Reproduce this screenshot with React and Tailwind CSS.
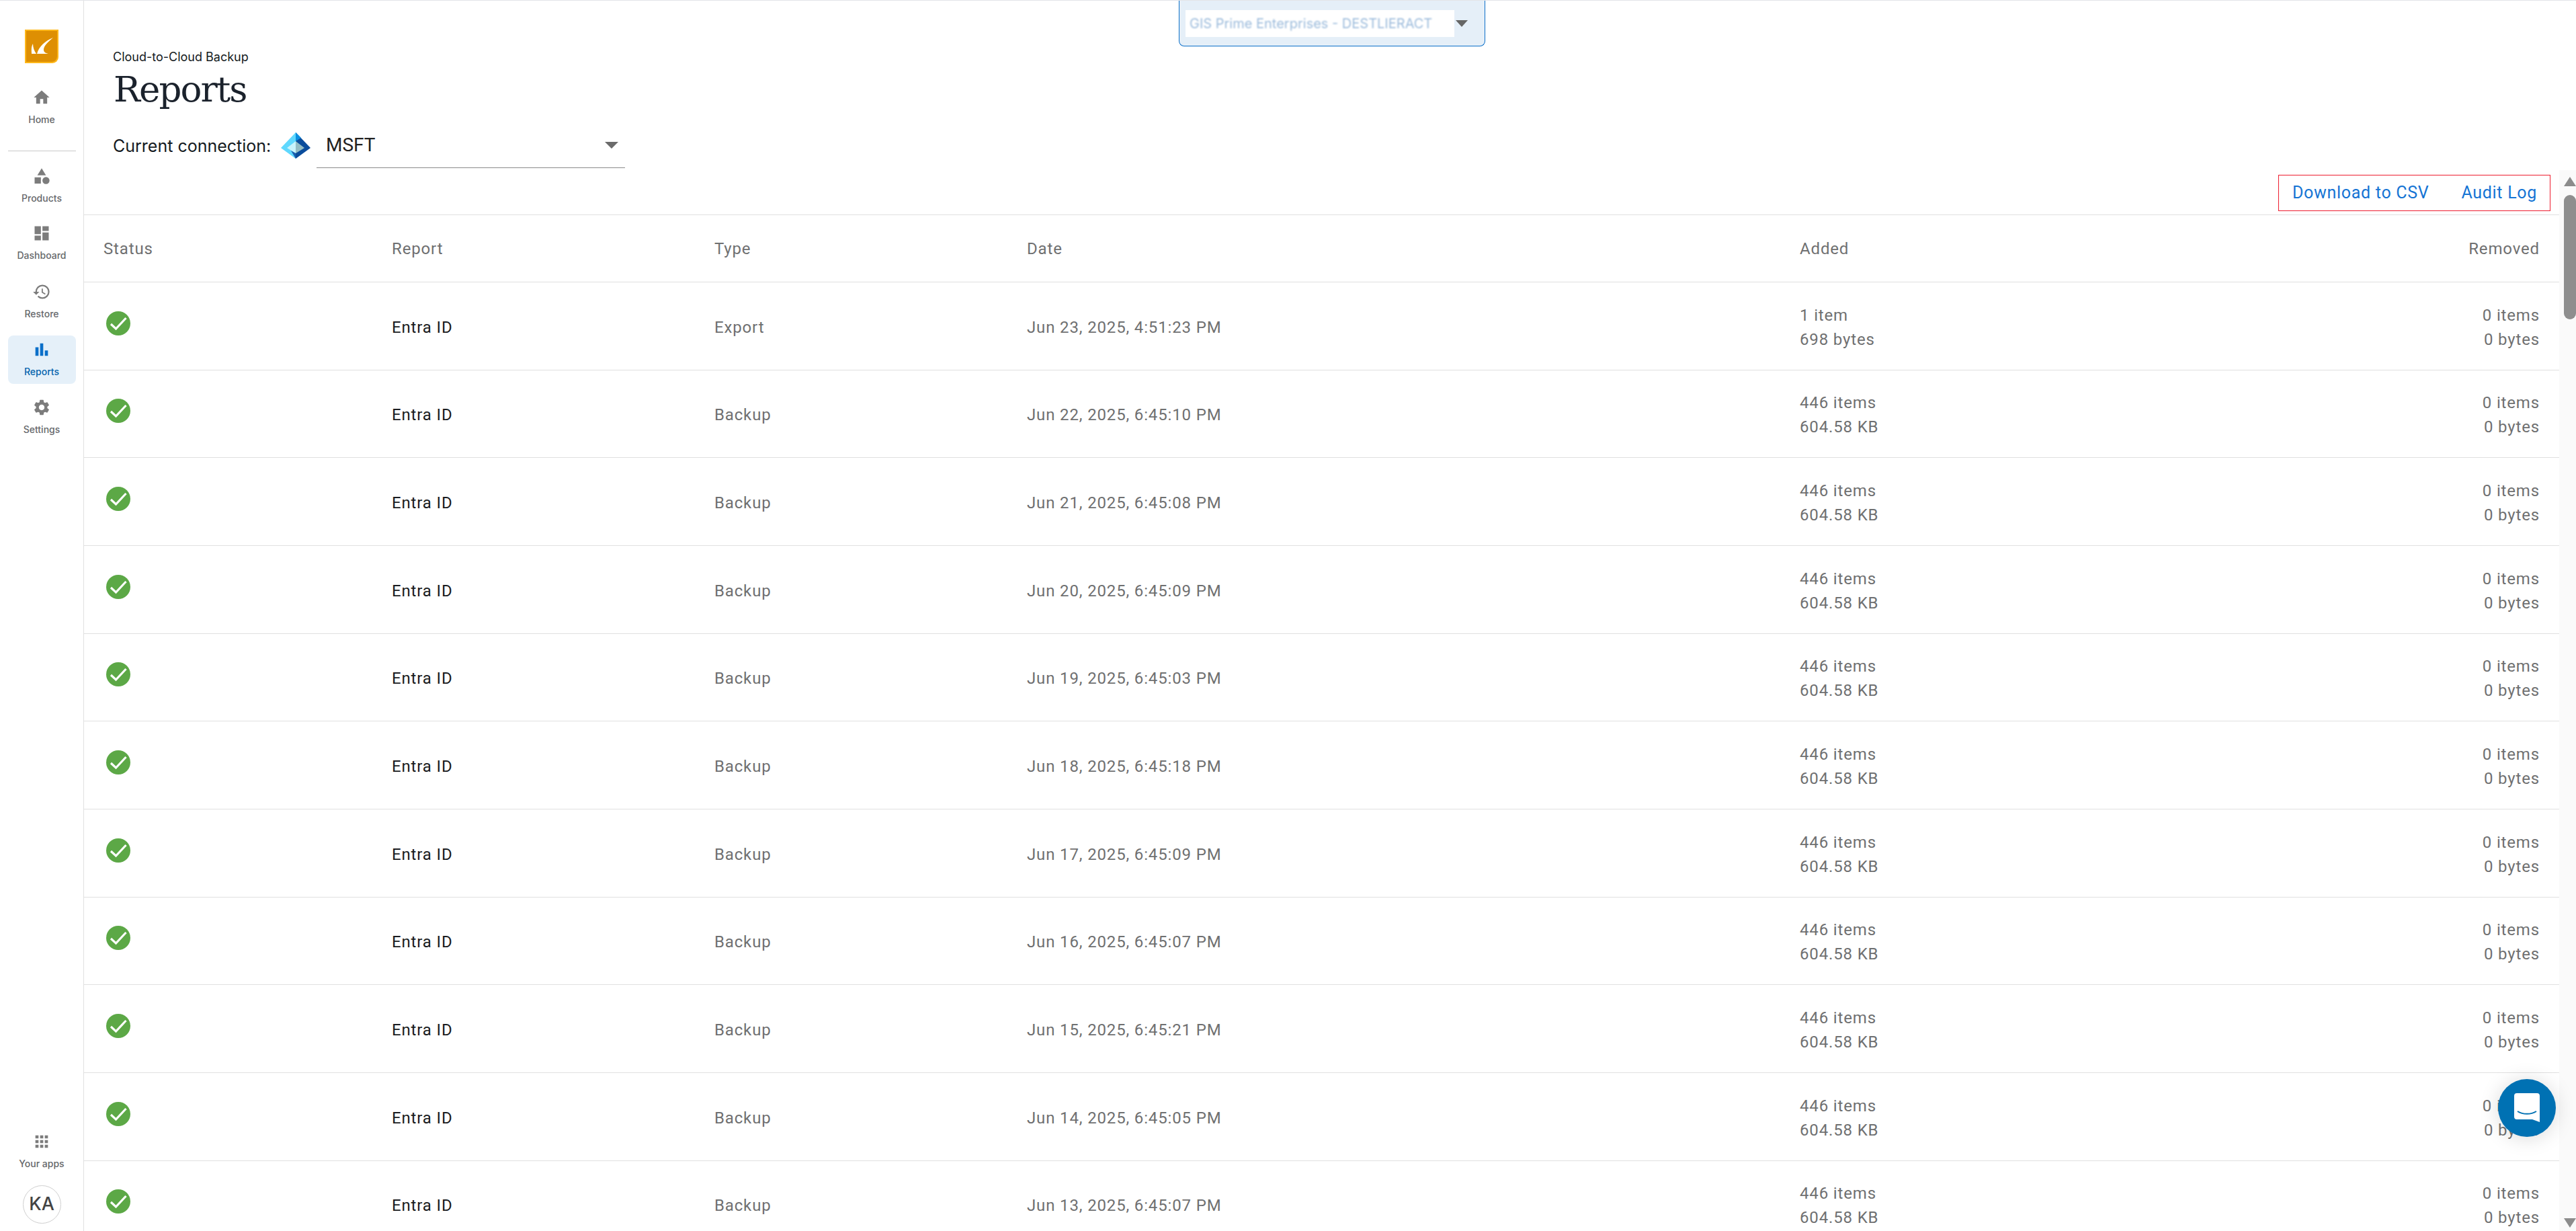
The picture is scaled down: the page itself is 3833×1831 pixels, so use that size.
import React from "react";
import { MdHome, MdCategory, MdDashboard, MdHistory, MdBarChart, MdSettings, MdApps } from "react-icons/md";

const rows = [
  ["Export", "Jun 23, 2025, 4:51:23 PM", "1 item", "698 bytes"],
  ["Backup", "Jun 22, 2025, 6:45:10 PM"],
  ["Backup", "Jun 21, 2025, 6:45:08 PM"],
  ["Backup", "Jun 20, 2025, 6:45:09 PM"],
  ["Backup", "Jun 19, 2025, 6:45:03 PM"],
  ["Backup", "Jun 18, 2025, 6:45:18 PM"],
  ["Backup", "Jun 17, 2025, 6:45:09 PM"],
  ["Backup", "Jun 16, 2025, 6:45:07 PM"],
  ["Backup", "Jun 15, 2025, 6:45:21 PM"],
  ["Backup", "Jun 14, 2025, 6:45:05 PM"],
  ["Backup", "Jun 13, 2025, 6:45:07 PM"],
];

const gridCols = "grid grid-cols-[429px_480px_465px_1150px_1fr] px-[29px] items-center";

function NavItem({ icon: Icon, label, active, className = "" }) {
  return (
    <div className={`flex flex-col items-center w-[101px] h-[72px] rounded-[8px] pt-[7px] shrink-0 ${active ? "bg-[#e5f0f9]" : ""} ${className}`}>
      <Icon className={`w-[28px] h-[28px] ${active ? "text-[#0b6fc9]" : "text-[#7c7c7c]"}`} />
      <span className={`mt-[9px] text-[14px] leading-[20px] font-medium font-['Inter',sans-serif] whitespace-nowrap ${active ? "text-[#0564ad]" : "text-[#66686b]"}`}>{label}</span>
    </div>
  );
}

function Check() {
  return (
    <svg viewBox="0 0 36 36" className="w-[36px] h-[36px] block">
      <circle cx="18" cy="18" r="18" fill="#5ca846" />
      <path d="M7 19 L14.5 26 L29.5 10" fill="none" stroke="#fff" strokeWidth="3.2" />
    </svg>
  );
}

function Logo() {
  return (
    <svg viewBox="0 0 50 50" className="w-[50px] h-[50px] block">
      <path d="M0 0 H50 V41 A9 9 0 0 1 41 50 H0 Z" fill="#fdb71a" />
      <path d="M2 2 H48 V40 A8 8 0 0 1 40 48 H2 Z" fill="#de8f03" />
      <path d="M42 12 C30 17 21 25 18 36 H35 C30 35 28 33 28 30 C28 24 35 18 42 12 Z" fill="#fff" />
      <path d="M12 21 C9 26 10 31 10 36 H17 C14 32 12 27 12 21 Z" fill="#fff" />
    </svg>
  );
}

function EntraIcon() {
  return (
    <svg viewBox="0 0 44 40" className="w-[44px] h-[40px] block shrink-0">
      <path d="M22 0 L0 23 L22 39 Z" fill="#5fd8fe" />
      <path d="M22 0 L44 23 L22 39 Z" fill="#0a4c9c" />
      <path d="M22 0 L30 8 L22 13 Z" fill="#0b8fe0" />
      <path d="M22 13 L9 23 L22 31 Z" fill="#c9f3fc" />
      <path d="M22 13 L35 23 L22 31 Z" fill="#93bcc4" />
      <path d="M22 31 L15 27 L22 39 Z" fill="#1b5fae" />
    </svg>
  );
}

export default function App() {
  return (
    <div className="relative w-[3833px] h-[1831px] overflow-hidden bg-white flex flex-col font-['Roboto',sans-serif]">
      <div className="h-px shrink-0 bg-[#e3e4e8]" />
      <div className="flex flex-1 min-h-0">
        {/* Sidebar */}
        <aside className="w-[125px] shrink-0 border-r border-[#e0e0e0] flex flex-col items-center">
          <div className="mt-[43px]"><Logo /></div>
          <NavItem icon={MdHome} label="Home" className="mt-[30px]" />
          <div className="w-[101px] h-px bg-[#c9c9c9] mt-[28px] shrink-0" />
          <NavItem icon={MdCategory} label="Products" className="mt-[16px]" />
          <NavItem icon={MdDashboard} label="Dashboard" className="mt-[13px]" />
          <NavItem icon={MdHistory} label="Restore" className="mt-[15px]" />
          <NavItem icon={MdBarChart} label="Reports" active className="mt-[14px]" />
          <NavItem icon={MdSettings} label="Settings" className="mt-[14px]" />
          <div className="flex-1" />
          <NavItem icon={MdApps} label="Your apps" />
          <div className="w-[57px] h-[57px] mt-[14px] mb-[11px] rounded-full border border-[#cfcfcf] flex items-center justify-center text-[27px] font-medium text-[#444] font-['Inter',sans-serif]">KA</div>
        </aside>

        {/* Main */}
        <main className="flex-1 min-w-0 flex flex-col">
          <header className="h-[318px] shrink-0 relative pl-[43px] pr-[14px]">
            <div className="pt-[72px] text-[18px] leading-[24px] font-['Inter',sans-serif] text-[#141a21]">Cloud-to-Cloud Backup</div>
            <h1 className="mt-[3px] ml-[1px] text-[53px] leading-[66px] tracking-[-1.9px] font-['DejaVu_Serif',serif] text-[#1b222c]">Reports</h1>
            <div className="flex items-center mt-[18px]">
              <span className="text-[25px] leading-[40px] font-['Inter',sans-serif] text-[#141a21] w-[250px] shrink-0 whitespace-nowrap">Current connection:</span>
              <EntraIcon />
              <div className="ml-[9px] w-[459px] h-[66px] border-b border-[#8b8b8b] flex items-center justify-between pl-[14px] pr-[10px] pb-[2px] text-[28px] text-[#222]">
                <span>MSFT</span>
                <span className="w-0 h-0 border-x-[10px] border-x-transparent border-t-[10px] border-t-[#6b6b6b]" />
              </div>
            </div>
            <div className="absolute right-[38px] top-[259px] w-[405px] h-[54px] border border-[#ee1c2e] flex items-center justify-between pl-[20px] pr-[19px] text-[25px] tracking-[0.7px] text-[#1574d4] whitespace-nowrap">
              <span>Download to CSV</span>
              <span>Audit Log</span>
            </div>
          </header>

          <div className="flex-1 min-h-0 flex pr-[25px]">
            <div className="flex-1 min-w-0 overflow-hidden">
              <div className={`${gridCols} h-[101px] border-y border-[#e0e0e0] text-[24px] text-[#6f7071] tracking-[0.85px]`}>
                <span>Status</span>
                <span>Report</span>
                <span>Type</span>
                <span>Date</span>
                <div className="flex justify-between"><span>Added</span><span>Removed</span></div>
              </div>
              {rows.map((r, i) => (
                <div key={i} className={`${gridCols} h-[130.67px] pt-[4px] border-b border-[#e0e0e0] text-[24px] text-[#6f7071] tracking-[0.85px]`}>
                  <div className="-mt-[12px] ml-[4px]"><Check /></div>
                  <span className="text-[#1a1c20]">Entra ID</span>
                  <span>{r[0]}</span>
                  <span>{r[1]}</span>
                  <div className="flex justify-between leading-[36px]">
                    <div className="flex flex-col"><span>{r[2] || "446 items"}</span><span>{r[3] || "604.58 KB"}</span></div>
                    <div className="flex flex-col items-end"><span>0 items</span><span>0 bytes</span></div>
                  </div>
                </div>
              ))}
            </div>
          </div>
        </main>
      </div>

      {/* Scrollbar */}
      <div className="absolute right-0 top-[253px] bottom-0 w-[25px] bg-[#fafafa]">
        <div className="absolute left-[7px] top-[10px] w-0 h-0 border-x-[9px] border-x-transparent border-b-[14px] border-b-[#8c8c8c]" />
        <div className="absolute left-[7px] top-[37px] w-[18px] h-[185px] rounded-[9px] bg-[#8e8e8e]" />
        <div className="absolute left-[7px] bottom-[5px] w-0 h-0 border-x-[9px] border-x-transparent border-t-[14px] border-t-[#8c8c8c]" />
      </div>

      {/* Floating account selector */}
      <div className="absolute left-[1754px] top-[1px] w-[456px] h-[68px] bg-[#e5eff8] border-x border-b border-[#0b6fc9] rounded-b-[8px] flex items-center pl-[9px]">
        <div className="w-[400px] h-[40px] bg-white flex items-center pl-[6px] overflow-hidden">
          <span className="text-[20px] text-[#9dbcdc] blur-[1.2px] whitespace-nowrap font-['Inter',sans-serif]">GIS Prime Enterprises - DESTLIERACT</span>
        </div>
        <span className="ml-[2px] w-0 h-0 border-x-[9px] border-x-transparent border-t-[10px] border-t-[#666]" />
      </div>

      {/* Chat launcher */}
      <div className="absolute left-[3717px] top-[1605px] w-[86px] h-[86px] rounded-full bg-[#0071b3] shadow-[0_2px_30px_rgba(0,0,0,0.15)] flex items-center justify-center">
        <svg viewBox="0 0 38 44" className="w-[38px] h-[44px]">
          <path d="M4 0 H34 A4 4 0 0 1 38 4 V43 L27 39 H4 A4 4 0 0 1 0 35 V4 A4 4 0 0 1 4 0 Z" fill="#fff" />
          <path d="M5 27 C13 32 25 32 33 27" fill="none" stroke="#0071b3" strokeWidth="2" />
        </svg>
      </div>
    </div>
  );
}
